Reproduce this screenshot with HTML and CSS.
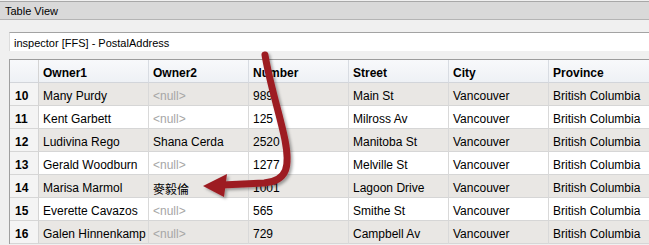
FILE: index.html
```html
<!DOCTYPE html>
<html lang="en">
<head>
  <meta charset="UTF-8">
  <title>Table View</title>
  <link rel="stylesheet" href="styles.css">
</head>
<body>
  <div class="view">
    <div class="title">Table View</div>
    <div class="source">inspector [FFS] - PostalAddress</div>

    <div class="grid">
      <div class="hd num"></div>
      <div class="hd">Owner1</div>
      <div class="hd">Owner2</div>
      <div class="hd">Number</div>
      <div class="hd">Street</div>
      <div class="hd">City</div>
      <div class="hd">Province</div>

      <div class="num">10</div>
      <div class="c alt">Many Purdy</div>
      <div class="c alt null">&lt;null&gt;</div>
      <div class="c alt">989</div>
      <div class="c alt">Main St</div>
      <div class="c alt">Vancouver</div>
      <div class="c alt">British Columbia</div>

      <div class="num">11</div>
      <div class="c">Kent Garbett</div>
      <div class="c null">&lt;null&gt;</div>
      <div class="c">125</div>
      <div class="c">Milross Av</div>
      <div class="c">Vancouver</div>
      <div class="c">British Columbia</div>

      <div class="num">12</div>
      <div class="c alt">Ludivina Rego</div>
      <div class="c alt">Shana Cerda</div>
      <div class="c alt">2520</div>
      <div class="c alt">Manitoba St</div>
      <div class="c alt">Vancouver</div>
      <div class="c alt">British Columbia</div>

      <div class="num">13</div>
      <div class="c">Gerald Woodburn</div>
      <div class="c null">&lt;null&gt;</div>
      <div class="c">1277</div>
      <div class="c">Melville St</div>
      <div class="c">Vancouver</div>
      <div class="c">British Columbia</div>

      <div class="num">14</div>
      <div class="c alt">Marisa Marmol</div>
      <div class="c alt cjk">麥毅倫</div>
      <div class="c alt">1001</div>
      <div class="c alt">Lagoon Drive</div>
      <div class="c alt">Vancouver</div>
      <div class="c alt">British Columbia</div>

      <div class="num">15</div>
      <div class="c">Everette Cavazos</div>
      <div class="c null">&lt;null&gt;</div>
      <div class="c">565</div>
      <div class="c">Smithe St</div>
      <div class="c">Vancouver</div>
      <div class="c">British Columbia</div>

      <div class="num">16</div>
      <div class="c alt">Galen Hinnenkamp</div>
      <div class="c alt null">&lt;null&gt;</div>
      <div class="c alt">729</div>
      <div class="c alt">Campbell Av</div>
      <div class="c alt">Vancouver</div>
      <div class="c alt">British Columbia</div>
    </div>

    <!-- callout arrow drawn over the table -->
    <svg class="arrow" width="649" height="245" viewBox="0 0 649 245">
      <defs>
        <filter id="shadow" x="-20%" y="-20%" width="140%" height="140%">
          <feDropShadow dx="2" dy="2" stdDeviation="1.5" flood-color="#000" flood-opacity="0.35"/>
        </filter>
      </defs>
      <g filter="url(#shadow)">
        <path d="M265 55 C270 85 280 115 285 140 C290 166 288 181 264 183 L222 185" fill="none" stroke="#9d1c24" stroke-width="7" stroke-linecap="round"/>
        <polygon points="203,186 227,174 224,197" fill="#9d1c24"/>
      </g>
    </svg>
  </div>
</body>
</html>
```

FILE: styles.css
```css
body {
  margin: 0;
  background: #f0f0f0;
  font-family: "Liberation Sans", Arial, sans-serif;
  color: #000;
  overflow: hidden;
}

.view {
  position: relative;
  width: 649px;
  height: 245px;
  overflow: hidden;
}

.title {
  margin-top: 1px;
  height: 17px;
  line-height: 19px;
  padding-left: 5px;
  font-size: 11px;
  background: #d9d9d9;
  border-top: 1px solid #a8a8a8;
  border-bottom: 1px solid #b4b4b4;
}

.source {
  margin: 12px 0 0 9px;
  height: 18px;
  line-height: 20px;
  padding-left: 4px;
  font-size: 11px;
  background: #fff;
  border-top: 1px solid #a3a3a3;
  border-left: 1px solid #dcdcdc;
}

.grid {
  display: grid;
  grid-template-columns: 29px 110px 100px 100px 100px 100px 130px;
  grid-auto-rows: 23px;
  margin: 8px 0 0 9px;
  border-top: 1px solid #9c9c9c;
  border-left: 1px solid #a0a0a0;
  font-size: 12px;
}

.grid > div {
  box-sizing: border-box;
  padding: 2px 0 0 4px;
  line-height: 23px;
  white-space: nowrap;
  overflow: hidden;
  border-right: 1px solid #d9d9d9;
  border-bottom: 1px solid #d6d6d6;
  background: #fff;
}

.grid > .hd {
  font-weight: bold;
  background: linear-gradient(#f8f9fb, #eef1f5);
  border-right-color: #d8dce2;
  border-bottom-color: #d2d5da;
}

.grid > .num {
  font-weight: bold;
  padding-left: 5px;
  background: #f4f4f4;
  border-right-color: #d4d4d4;
}

.grid > .hd.num {
  background: linear-gradient(#f8f9fb, #eef1f5);
}

.grid > .alt {
  background: #e9e7e4;
}

.null {
  color: #a6a6a6;
}

.cjk {
  font-family: "Noto Sans CJK TC", "Noto Sans CJK SC", sans-serif;
  font-size: 12px;
}

.arrow {
  position: absolute;
  top: 0;
  left: 0;
  pointer-events: none;
}
```
